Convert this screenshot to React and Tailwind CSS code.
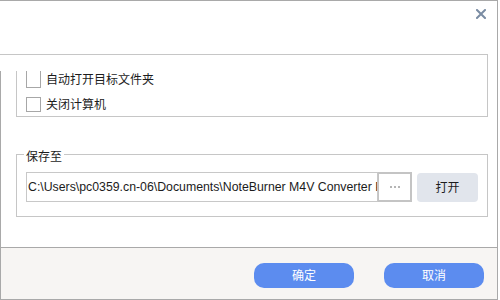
const cjk = "font-['Liberation_Sans','Noto_Sans_CJK_SC',sans-serif]";

function Check({ label, clipped }) {
  return (
    <div className={`flex items-center ${clipped ? 'h-[17px]' : 'h-[15px] mt-[9px]'}`}>
      <span
        className={`block w-[15px] border-[#a7a7a7] bg-white ${
          clipped ? 'h-[17px] border-l border-r border-b' : 'h-[15px] border'
        }`}
      />
      <span className="ml-[5px] text-[12px] leading-[16px] text-[#1c1c1c]">{label}</span>
    </div>
  );
}

export default function App() {
  return (
    <div className={`w-[500px] h-[300px] bg-white overflow-hidden ${cjk}`}>
      <div className="w-[498px] h-[300px] border-t border-r border-b border-[#a9a9a9] flex flex-col">
        <div className="h-[53px] flex justify-end items-start pt-[8px] pr-[11px]">
          <svg width="10" height="10" viewBox="0 0 10 10">
            <path d="M1 1L9 9M9 1L1 9" stroke="#7a8ca3" strokeWidth="2" strokeLinecap="square" />
          </svg>
        </div>

        <div className="h-[17px] w-[488px] border-t border-r border-[#c6c6c6]" />

        <div className="flex-1 flex flex-col border-l border-[#a9a9a9]">
          <div className="ml-[15px] w-[472px] h-[46px] border-l border-r border-b border-[#c6c6c6] pl-[9px]">
            <Check label="自动打开目标文件夹" clipped />
            <Check label="关闭计算机" />
          </div>

          <div className="ml-[15px] mt-[37px] w-[472px] h-[63px] border border-[#c6c6c6] flex flex-col">
            <span className="self-start ml-[7px] -mt-[5px] px-[2px] bg-white text-[12px] leading-[14px] text-[#1c1c1c]">
              保存至
            </span>
            <div className="flex items-start ml-[9px] mt-[8px]">
              <div className="w-[352px] h-[30px] border border-[#c8c8c8] pl-[1px] overflow-hidden whitespace-nowrap text-[12.3px] leading-[28px] text-[#1c1c1c]">
                C:\Users\pc0359.cn-06\Documents\NoteBurner M4V Converter Plus
              </div>
              <button className="w-[34px] h-[30px] border-2 border-l-[1px] border-[#c4c4c4] bg-white flex items-center justify-center gap-[2px]">
                <span className="block w-[2px] h-[2px] bg-[#b5b5b5]" />
                <span className="block w-[2px] h-[2px] bg-[#b5b5b5]" />
                <span className="block w-[2px] h-[2px] bg-[#b5b5b5]" />
              </button>
              <button className="ml-[5px] mt-[1px] w-[61px] h-[29px] rounded-[4px] bg-[#e1e5ec] text-[12px] text-[#1c1c1c]">
                打开
              </button>
            </div>
          </div>

          <div className="mt-auto h-[52px] border-t border-[#a9a9a9] bg-[#f7f5f3] flex justify-end items-start gap-[30px] pt-[15px] pr-[13px]">
            <button className="w-[100px] h-[25px] rounded-[10px] bg-[#5c8cef] text-white text-[12px]">确定</button>
            <button className="w-[100px] h-[25px] rounded-[10px] bg-[#5c8cef] text-white text-[12px]">取消</button>
          </div>
        </div>
      </div>
    </div>
  );
}
